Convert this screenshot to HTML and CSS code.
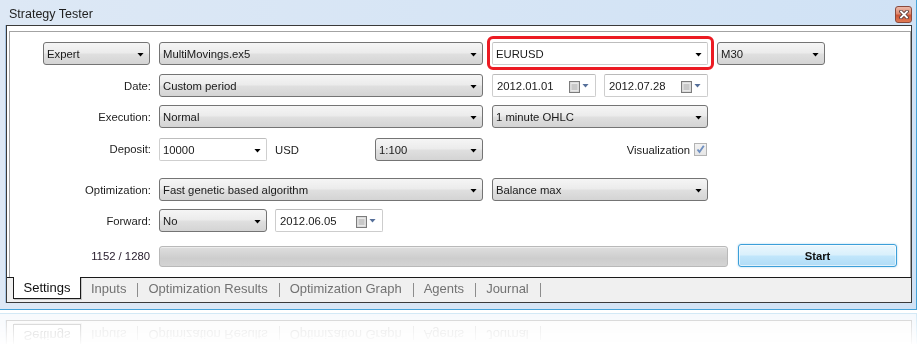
FILE: index.html
```html
<!DOCTYPE html>
<html>
<head>
<meta charset="utf-8">
<title>Strategy Tester</title>
<link rel="stylesheet" href="styles.css">
</head>
<body>
<div class="window">
  <div class="titlebar">
    <span class="title">Strategy Tester</span>
    <span class="close">
      <svg width="10" height="9" viewBox="0 0 10 9"><path d="M2 1.5L8 7.5M8 1.5L2 7.5" stroke="#5a3a3a" stroke-width="3.6" stroke-linecap="square"/><path d="M2 1.5L8 7.5M8 1.5L2 7.5" stroke="#fff" stroke-width="1.8" stroke-linecap="square"/></svg>
    </span>
  </div>
  <div class="client">
    <div class="panel">
      <div class="form">
        <div class="combo drop w107 right">Expert<i class="arr"></i></div>
        <div class="combo drop">MultiMovings.ex5<i class="arr"></i></div>
        <div class="hl">
          <div class="combo edit">EURUSD<i class="arr"></i></div>
          <span class="mark"></span>
        </div>
        <div class="combo drop">M30<i class="arr"></i></div>

        <label class="lbl">Date:</label>
        <div class="combo drop">Custom period<i class="arr"></i></div>
        <div class="pair">
          <div class="date">2012.01.01<i class="cal"><svg width="11" height="12" viewBox="0 0 11 12"><rect x="0.5" y="0.5" width="10" height="11" fill="#cfcfcf" stroke="#7c7c7c"/><rect x="1.5" y="1.5" width="8" height="9" fill="#e9e9e9"/><path d="M2.5 4H8.5M2.5 6H8.5M2.5 8H8.5" stroke="#a9a9a9"/></svg></i><i class="tri"></i></div>
          <div class="date">2012.07.28<i class="cal"><svg width="11" height="12" viewBox="0 0 11 12"><rect x="0.5" y="0.5" width="10" height="11" fill="#cfcfcf" stroke="#7c7c7c"/><rect x="1.5" y="1.5" width="8" height="9" fill="#e9e9e9"/><path d="M2.5 4H8.5M2.5 6H8.5M2.5 8H8.5" stroke="#a9a9a9"/></svg></i><i class="tri"></i></div>
        </div>
        <span></span>

        <label class="lbl">Execution:</label>
        <div class="combo drop">Normal<i class="arr"></i></div>
        <div class="combo drop">1 minute OHLC<i class="arr"></i></div>
        <span></span>

        <label class="lbl">Deposit:</label>
        <div class="deposit">
          <div class="combo edit w108">10000<i class="arr"></i></div>
          <span class="usd">USD</span>
          <div class="combo drop w108 push">1:100<i class="arr"></i></div>
        </div>
        <div class="vis">Visualization <span class="check"><svg width="11" height="11" viewBox="0 0 11 11"><path d="M2.5 5.5L4.5 8L8.8 1.8" fill="none" stroke="#6f8fc0" stroke-width="1.9"/></svg></span></div>
        <span></span>

        <label class="lbl">Optimization:</label>
        <div class="combo drop">Fast genetic based algorithm<i class="arr"></i></div>
        <div class="combo drop">Balance max<i class="arr"></i></div>
        <span></span>

        <label class="lbl">Forward:</label>
        <div class="pair">
          <div class="combo drop w108">No<i class="arr"></i></div>
          <div class="date w108">2012.06.05<i class="cal"><svg width="11" height="12" viewBox="0 0 11 12"><rect x="0.5" y="0.5" width="10" height="11" fill="#cfcfcf" stroke="#7c7c7c"/><rect x="1.5" y="1.5" width="8" height="9" fill="#e9e9e9"/><path d="M2.5 4H8.5M2.5 6H8.5M2.5 8H8.5" stroke="#a9a9a9"/></svg></i><i class="tri"></i></div>
        </div>
        <span></span>
        <span></span>
      </div>
      <div class="runrow">
        <span class="count">1152 / 1280</span>
        <div class="progress"></div>
        <button class="start">Start</button>
      </div>
    </div>
    <div class="tabs">
      <span class="tab active">Settings</span>
      <span class="tab">Inputs</span><i class="sep"></i>
      <span class="tab">Optimization Results</span><i class="sep"></i>
      <span class="tab">Optimization Graph</span><i class="sep"></i>
      <span class="tab">Agents</span><i class="sep"></i>
      <span class="tab">Journal</span><i class="sep"></i>
    </div>
  </div>
</div>
</body>
</html>
```
FILE: styles.css
```css
html, body {
  margin: 0;
  padding: 0;
  background: #fff;
}
body {
  width: 920px;
  height: 344px;
  overflow: hidden;
  font-family: "Liberation Sans", Arial, sans-serif;
  font-size: 11.3px;
  color: #1a1a1a;
}
.window {
  width: 917px;
  height: 310px;
  box-sizing: border-box;
  border-right: 1px solid #44a2d8;
  border-bottom: 1px solid #44a2d8;
  background: linear-gradient(to right, #dde8f5, #d0e2f5);
  -webkit-box-reflect: below 3px linear-gradient(transparent 89%, rgba(0, 0, 0, 0.24));
}
.titlebar {
  height: 25px;
  display: flex;
  align-items: center;
  justify-content: space-between;
  padding: 0 4px 0 9px;
}
.title {
  font-size: 12.5px;
  color: #1e1e1e;
  padding-top: 3px;
}
.close {
  width: 17px;
  height: 17px;
  box-sizing: border-box;
  border: 1px solid #8a4a3c;
  border-radius: 3px;
  background: linear-gradient(#ecb8a8, #de8a70 45%, #cc5434 55%, #e07a55);
  display: flex;
  align-items: center;
  justify-content: center;
  margin-top: 3px;
}
.close svg { display: block; }
.client {
  margin-left: 6px;
  width: 906px;
  height: 278px;
  box-sizing: border-box;
  border: 1px solid #3a3a3a;
  background: #fff;
  box-shadow: -1px 0 0 #a9c6e4;
}
.panel {
  margin: 5px 0 0 2px;
  width: 902px;
  height: 246px;
  box-sizing: border-box;
  border: 1px solid #a3a3a3;
  border-bottom: none;
  padding: 10px 0 0 0;
  background: #fff;
}
.form {
  display: grid;
  grid-template-columns: 140px 324px 216px 108px;
  grid-template-rows: 32px 31px 32px 41px 31px 23px;
  column-gap: 9px;
  align-items: start;
}
.lbl {
  justify-self: end;
  line-height: 23px;
  margin-right: -1px;
  padding-top: 1px;
  color: #1e1e1e;
}
.combo {
  height: 23px;
  box-sizing: border-box;
  display: flex;
  align-items: center;
  padding: 0 5px 0 3px;
  white-space: nowrap;
}
.drop {
  border: 1px solid #747474;
  border-radius: 3px;
  background: linear-gradient(#f5f5f5, #ececec 45%, #dfdfdf 55%, #d4d4d4);
}
.edit {
  border: 1px solid #cfcfcf;
  border-top-color: #bdbdbd;
  border-radius: 2px;
  background: #fff;
}
.arr {
  display: block;
  width: 7px;
  height: 4px;
  margin-left: auto;
  margin-top: 2px;
  background: #000;
  clip-path: polygon(0 0, 100% 0, 50% 100%);
}
.w107 { width: 107px; }
.w108 { width: 108px; }
.right { justify-self: end; }
.hl {
  position: relative;
}
.mark {
  position: absolute;
  top: -6px;
  left: -5px;
  right: -6px;
  bottom: -5px;
  border: 3px solid #ec1b23;
  border-radius: 6px;
  pointer-events: none;
}
.pair {
  display: flex;
  gap: 8px;
}
.date {
  width: 104px;
  height: 23px;
  box-sizing: border-box;
  display: flex;
  align-items: center;
  padding: 0 6px 0 4px;
  border: 1px solid #cdcdcd;
  border-top-color: #bababa;
  border-radius: 2px;
  background: #fff;
  white-space: nowrap;
}
.date.w108 { width: 108px; }
.cal {
  display: block;
  margin-left: auto;
  height: 12px;
  margin-top: 3px;
}
.cal svg { display: block; }
.tri {
  display: block;
  width: 7px;
  height: 4px;
  margin-left: 2px;
  background: #556f99;
  clip-path: polygon(0 0, 100% 0, 50% 100%);
}
.deposit {
  display: flex;
  align-items: center;
}
.usd {
  margin-left: 8px;
  line-height: 23px;
  padding-top: 2px;
}
.push { margin-left: auto; }
.vis {
  justify-self: end;
  display: flex;
  align-items: center;
  gap: 4px;
  height: 23px;
  margin-right: 1px;
  margin-top: 1px;
}
.check {
  width: 13px;
  height: 13px;
  box-sizing: border-box;
  border: 1px solid #b3b3b3;
  background: linear-gradient(#f2f2f2, #e6e6e6);
  display: flex;
  align-items: center;
  justify-content: center;
}
.check svg { display: block; }
.runrow {
  display: flex;
  align-items: flex-end;
  margin-top: 12px;
  height: 23px;
}
.count {
  width: 140px;
  text-align: right;
  line-height: 21px;
  margin-right: 9px;
  color: #2a2030;
}
.progress {
  width: 569px;
  height: 21px;
  box-sizing: border-box;
  border: 1px solid #b9b9b9;
  border-radius: 3px;
  background: linear-gradient(#dedede, #cdcdcd 60%, #d4d4d4);
  box-shadow: inset 0 1px 0 #ececec;
}
.start {
  margin-left: 10px;
  width: 159px;
  height: 23px;
  box-sizing: border-box;
  border: 1px solid #3c9fd9;
  border-radius: 3px;
  background: linear-gradient(#eaf6fd, #d9f0fc 48%, #c1e6fb 52%, #b0dcf6);
  box-shadow: inset 0 0 0 1px rgba(255, 255, 255, 0.6), 0 0 2px rgba(60, 160, 220, 0.5);
  font-family: "Liberation Sans", Arial, sans-serif;
  font-size: 11.3px;
  font-weight: bold;
  color: #111;
  padding: 0;
}
.tabs {
  height: 25px;
  box-sizing: border-box;
  border-top: 1px solid #1a1a1a;
  background: #f0f0f0;
  display: flex;
  align-items: flex-start;
  font-size: 13px;
  color: #727272;
}
.tab {
  height: 21px;
  line-height: 21px;
  padding: 0 11px 0 10px;
  white-space: nowrap;
}
.tab.active {
  margin: -1px 0 0 6px;
  width: 68px;
  height: 22px;
  box-sizing: border-box;
  padding: 0;
  text-align: center;
  line-height: 21px;
  background: #fff;
  border: 1px solid #1a1a1a;
  border-top: none;
  color: #111;
  box-shadow: 1px 1px 0 #c8c8c8;
}
.sep {
  display: block;
  width: 1px;
  height: 14px;
  margin-top: 5px;
  background: #8d8d8d;
}
```
